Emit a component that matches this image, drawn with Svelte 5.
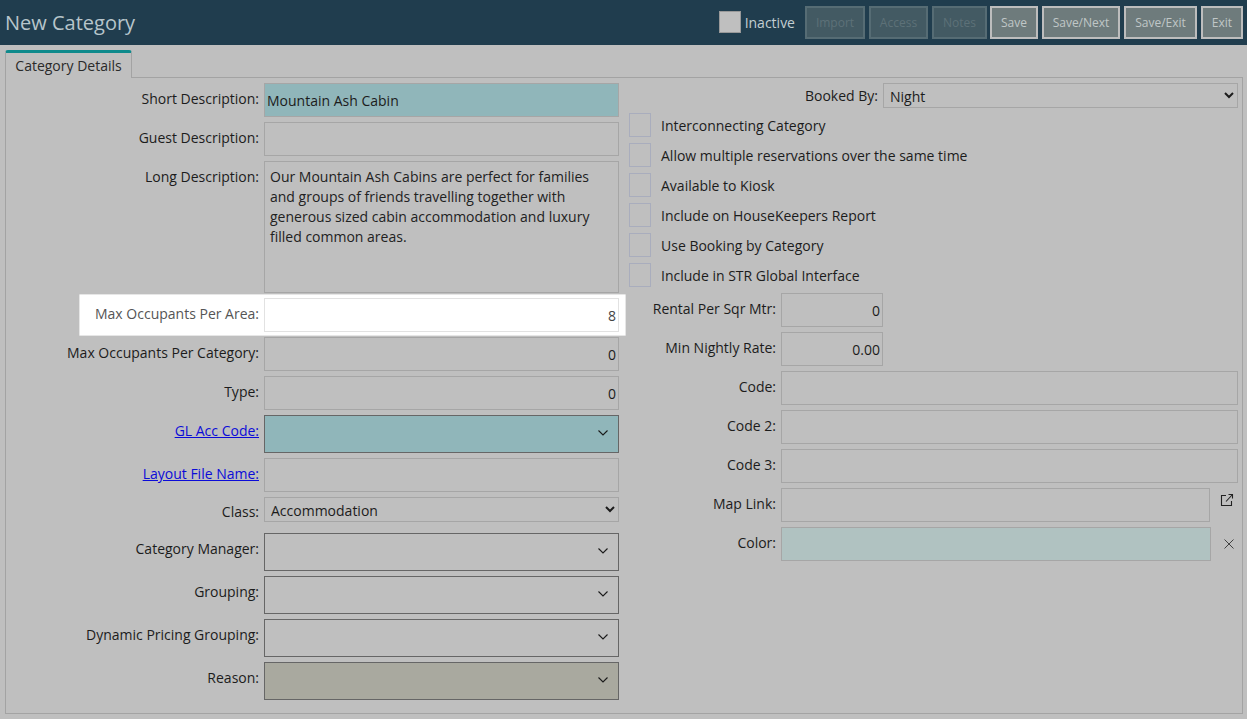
<script>
	const checks = [
		'Interconnecting Category',
		'Allow multiple reservations over the same time',
		'Available to Kiosk',
		'Include on HouseKeepers Report',
		'Use Booking by Category',
		'Include in STR Global Interface'
	];
	const longText =
		'Our Mountain Ash Cabins are perfect for families and groups of friends travelling together with generous sized cabin accommodation and luxury filled common areas.';
</script>

{#snippet chevron()}
	<svg class="chev" width="10" height="6" viewBox="0 0 10 6"><path d="M0.5 0.5 5 5 9.5 0.5" fill="none" stroke="#1a1a1a" stroke-width="1.1" /></svg>
{/snippet}

{#snippet combo(label, cls = '', link = false)}
	<div class="row">
		<label class="lbl">
			{#if link}<a href="#top">{label}:</a>{:else}{label}:{/if}
		</label>
		<div class="combo {cls}">{@render chevron()}</div>
	</div>
{/snippet}

{#snippet field(label, value = '', cls = '')}
	<div class="row">
		<label class="lbl">{label}:</label>
		<div class="input {cls}">{value}</div>
	</div>
{/snippet}

<header>
	<h1>New Category</h1>
	<div class="actions">
		<span class="inactive-box"></span>
		<span class="inactive">Inactive</span>
		<button class="off w60">Import</button>
		<button class="off w59">Access</button>
		<button class="off w55">Notes</button>
		<button class="w48">Save</button>
		<button class="w78">Save/Next</button>
		<button class="w73">Save/Exit</button>
		<button class="w42">Exit</button>
	</div>
</header>

<main>
	<div class="tabs"><div class="tab">Category Details</div></div>
	<div class="panel">
		<section class="left">
			{@render field('Short Description', 'Mountain Ash Cabin', 'teal')}
			{@render field('Guest Description')}
			<div class="row">
				<label class="lbl">Long Description:</label>
				<div class="input long">{longText}</div>
			</div>
			<div class="row spot">
				<label class="lbl">Max Occupants Per Area:</label>
				<div class="input num">8</div>
			</div>
			{@render field('Max Occupants Per Category', '0', 'num')}
			{@render field('Type', '0', 'num')}
			{@render combo('GL Acc Code', 'teal', true)}
			<div class="row">
				<label class="lbl"><a href="#top">Layout File Name:</a></label>
				<div class="input"></div>
			</div>
			<div class="row class-row">
				<label class="lbl">Class:</label>
				<select><option>Accommodation</option></select>
			</div>
			{@render combo('Category Manager')}
			{@render combo('Grouping')}
			{@render combo('Dynamic Pricing Grouping')}
			{@render combo('Reason', 'khaki')}
		</section>

		<section class="right">
			<div class="booked">
				<label class="lbl">Booked By:</label>
				<select><option>Night</option></select>
			</div>
			<div class="checks">
				{#each checks as c}
					<div class="check"><span class="box"></span><span>{c}</span></div>
				{/each}
			</div>
			<div class="fields">
				<div class="row">
					<label class="lbl">Rental Per Sqr Mtr:</label>
					<div class="input num small">0</div>
				</div>
				<div class="row">
					<label class="lbl">Min Nightly Rate:</label>
					<div class="input num small">0.00</div>
				</div>
				{@render field('Code')}
				{@render field('Code 2')}
				{@render field('Code 3')}
				<div class="row">
					<label class="lbl">Map Link:</label>
					<div class="input short"></div>
					<svg class="ext" width="14" height="14" viewBox="0 0 14 14" fill="none" stroke="#222" stroke-width="1.1">
						<path d="M6 2.5H1.5V12.5H11.5V8" />
						<path d="M6 8.5 12.5 1.5M8.5 1.5H12.5V5.5" />
					</svg>
				</div>
				<div class="row">
					<label class="lbl">Color:</label>
					<div class="input short colour"></div>
					<svg class="x" width="10" height="10" viewBox="0 0 10 10" fill="none" stroke="#333" stroke-width="0.9">
						<path d="M0.5 0.5 9.5 9.5M9.5 0.5 0.5 9.5" />
					</svg>
				</div>
			</div>
		</section>
	</div>
</main>

<style>
	:global(body) {
		margin: 0;
		background: #bfbfbf;
		font-family: 'Open Sans', 'Liberation Sans', sans-serif;
		font-size: 14px;
		color: #1c1c1c;
	}

	header {
		height: 45px;
		background: #203d4e;
		display: flex;
		align-items: center;
		justify-content: space-between;
		padding: 0 4px 0 5px;
		box-sizing: border-box;
	}

	h1 {
		margin: 0 0 1px;
		font-size: 20px;
		font-weight: 400;
		color: #b7c5cb;
	}

	.actions {
		display: flex;
		align-items: center;
		gap: 4px;
		margin-top: -1px;
	}

	.inactive-box {
		width: 22px;
		height: 22px;
		background: #bfbfbf;
		border: 1px solid #999;
		box-sizing: border-box;
	}

	.inactive {
		color: #c3ced2;
		margin-right: 6px;
	}

	button {
		height: 33px;
		padding: 0;
		font: inherit;
		font-size: 12px;
		background: #6e7b7c;
		color: #c0c7c7;
		border: 2px solid #bdbdbd;
		box-sizing: border-box;
	}

	button.off {
		background: #435a63;
		border-color: #566c74;
		color: #5d7178;
	}

	.w60 { width: 60px; }
	.w59 { width: 59px; }
	.w55 { width: 55px; margin-right: -1px; }
	.w48 { width: 48px; }
	.w78 { width: 78px; }
	.w73 { width: 73px; }
	.w42 { width: 42px; }

	main {
		padding: 5px 4px 0 5px;
	}

	.tabs {
		height: 27px;
		display: flex;
		position: relative;
		z-index: 1;
	}

	.tab {
		height: 28px;
		width: 127px;
		box-sizing: border-box;
		border: 1px solid #a3a3a3;
		border-top: 3px solid #0e8a8c;
		border-bottom: none;
		border-radius: 3px 3px 0 0;
		background: #bfbfbf;
		text-align: center;
		line-height: 25px;
		color: #2a2a2a;
	}

	.panel {
		height: 637px;
		box-sizing: border-box;
		border: 1px solid #a3a3a3;
		padding: 5px 4px 0 0;
		display: flex;
	}

	.left {
		width: 613px;
		display: flex;
		flex-direction: column;
		gap: 5px;
		flex: none;
	}

	.right {
		margin-left: 10px;
		flex: 1;
		display: flex;
		flex-direction: column;
	}

	.row {
		display: flex;
		align-items: flex-start;
		position: relative;
	}

	.lbl {
		width: 253px;
		flex: none;
		text-align: right;
		margin-right: 5px;
		line-height: 20px;
		padding-top: 6px;
	}

	a {
		color: #0b0bd8;
		text-decoration: underline;
	}

	.input {
		flex: 1;
		height: 34px;
		min-width: 0;
		box-sizing: border-box;
		border: 1px solid #a6a6a6;
		padding: 1px 2px 0;
		line-height: 32px;
		outline: 0.5px solid #a6a6a6;
		outline-offset: -1px;
	}

	.teal {
		background: #90b6ba;
	}

	.num {
		text-align: right;
	}

	.long {
		height: 132px;
		line-height: 20px;
		padding: 5px 5px;
		color: #222;
	}

	.spot {
		background: #fff;
		margin: -4px -7px -4px 73px;
		padding: 3px 6px 3px 0;
		border: 1px solid #e6e6e6;
		z-index: 2;
		border-radius: 1px;
	}

	.spot .lbl {
		width: 179px;
		color: #555;
	}

	.spot .input {
		border: 1px solid #e2e2e2;
		outline: none;
		background: #fff;
		color: #444;
	}

	.combo {
		flex: 1;
		height: 38px;
		box-sizing: border-box;
		border: 1px solid #666;
		display: flex;
		align-items: center;
		justify-content: flex-end;
		padding-right: 10px;
	}

	.khaki {
		background: #a9a99f;
	}

	.chev {
		margin-bottom: 2px;
	}

	select {
		flex: 1;
		height: 25px;
		min-width: 0;
		box-sizing: border-box;
		font: inherit;
		color: #1c1c1c;
		background: #bfbfbf;
		border: 1px solid #a6a6a6;
		padding: 1px 0 0 2px;
		border-radius: 0;
	}

	.class-row {
		margin-bottom: 6px;
	}

	.class-row .lbl {
		padding-top: 5px;
	}

	.booked {
		display: flex;
		height: 25px;
	}

	.booked .lbl {
		width: auto;
		flex: 1;
		padding-top: 3px;
	}

	.booked select {
		flex: none;
		width: 355px;
	}

	.checks {
		display: flex;
		flex-direction: column;
		gap: 6px;
		margin-top: 5px;
	}

	.check {
		display: flex;
		align-items: center;
		height: 24px;
	}

	.box {
		width: 22px;
		height: 24px;
		box-sizing: border-box;
		border: 1px solid #a9adbd;
		margin-right: 10px;
	}

	.fields {
		margin-top: 6px;
		display: flex;
		flex-direction: column;
		gap: 5px;
	}

	.fields .lbl {
		width: 147px;
	}

	.fields .small {
		flex: none;
		width: 102px;
	}

	.fields .short {
		flex: none;
		width: 429px;
	}

	.colour {
		background: #b0c2c1;
		width: 430px !important;
	}

	.ext {
		margin: 5px 0 0 10px;
	}

	.x {
		margin: 12px 0 0 13px;
	}
</style>
